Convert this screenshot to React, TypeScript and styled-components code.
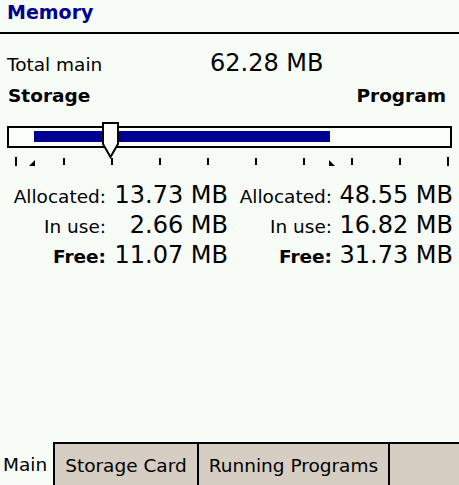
import styled, { createGlobalStyle } from "styled-components";

const GlobalStyle = createGlobalStyle`
    html, body {
        margin: 0;
        padding: 0;
        background: #f7fcf7;
    }
    body {
        font-family: "DejaVu Sans", "Liberation Sans", sans-serif;
        color: #000000;
    }
`;

const storage = { allocated: "13.73 MB", inUse: "2.66 MB", free: "11.07 MB" };
const program = { allocated: "48.55 MB", inUse: "16.82 MB", free: "31.73 MB" };
const ticks = Array.from({ length: 10 }, (_, i) => i);

const App = () => {
    return (
        <Page>
            <GlobalStyle />
            <Header>
                <Title>Memory</Title>
            </Header>
            <Content>
                <TotalRow>
                    <TotalLabel>Total main</TotalLabel>
                    <TotalValue>62.28 MB</TotalValue>
                </TotalRow>
                <SideLabels>
                    <span>Storage</span>
                    <span>Program</span>
                </SideLabels>
                <Slider>
                    <Track>
                        <Fill style={{ left: 25, width: 296 }} />
                    </Track>
                    <Thumb width="17" height="37" viewBox="0 0 17 37">
                        <path d="M1 1 H16 V22 L8.5 35 L1 22 Z" fill="#ffffff" stroke="#000000" strokeWidth="2" strokeLinejoin="miter" />
                    </Thumb>
                </Slider>
                <Ticks>
                    {ticks.map((i) => (
                        <Tick key={i} $edge={i === 0 || i === ticks.length - 1} />
                    ))}
                    <Marker $left={22} $flip={false} />
                    <Marker $left={322} $flip={true} />
                </Ticks>
                <Stats>
                    <Label>Allocated:</Label>
                    <Value>{storage.allocated}</Value>
                    <Label>Allocated:</Label>
                    <Value>{program.allocated}</Value>
                    <Label>In use:</Label>
                    <Value>{storage.inUse}</Value>
                    <Label>In use:</Label>
                    <Value>{program.inUse}</Value>
                    <Label $bold>Free:</Label>
                    <Value>{storage.free}</Value>
                    <Label $bold>Free:</Label>
                    <Value>{program.free}</Value>
                </Stats>
            </Content>
            <TabBar>
                <Tab $active>Main</Tab>
                <Tab>Storage Card</Tab>
                <Tab>Running Programs</Tab>
                <TabFiller />
            </TabBar>
        </Page>
    );
};

const Page = styled.div`
    height: 485px;
    display: flex;
    flex-direction: column;
    overflow: hidden;
`;

const Header = styled.div`
    height: 34px;
    border-bottom: 2px solid #000000;
    box-sizing: border-box;
    padding: 0 7px;
`;

const Title = styled.h1`
    margin: 0;
    font-size: 19px;
    line-height: 25px;
    font-weight: bold;
    color: #000090;
`;

const Content = styled.div`
    flex: 1;
    padding: 0 7px;
`;

const TotalRow = styled.div`
    display: flex;
    align-items: baseline;
    height: 44px;
    padding-top: 15px;
    box-sizing: border-box;
`;

const TotalLabel = styled.span`
    width: 203px;
    font-size: 18.5px;
`;

const TotalValue = styled.span`
    font-size: 24px;
`;

const SideLabels = styled.div`
    display: flex;
    justify-content: space-between;
    padding: 7px 6px 0 1px;
    font-size: 18.5px;
    font-weight: bold;
    height: 36px;
    box-sizing: border-box;
`;

const Slider = styled.div`
    position: relative;
    margin-top: 12px;
    height: 22px;
`;

const Track = styled.div`
    position: relative;
    height: 22px;
    width: 445px;
    box-sizing: border-box;
    border: 2px solid #000000;
    background: #fbfffb;
`;

const Fill = styled.div`
    position: absolute;
    top: 3px;
    height: 11px;
    background: #000090;
`;

const Thumb = styled.svg`
    position: absolute;
    left: 95px;
    top: -4px;
`;

const Ticks = styled.div`
    position: relative;
    display: flex;
    justify-content: space-between;
    align-items: flex-start;
    padding: 9px 3px 0 8px;
    height: 26px;
    box-sizing: border-box;
`;

const Tick = styled.div<{ $edge?: boolean }>`
    width: 2px;
    height: ${(p) => (p.$edge ? "9px" : "7px")};
    margin-top: ${(p) => (p.$edge ? "0" : "1px")};
    background: #000000;
`;

const Marker = styled.div<{ $left: number; $flip: boolean }>`
    position: absolute;
    top: 12px;
    left: ${(p) => p.$left}px;
    width: 0;
    height: 0;
    border-bottom: 6px solid #000000;
    ${(p) =>
        p.$flip
            ? "border-right: 6px solid transparent;"
            : "border-left: 6px solid transparent;"}
`;

const Stats = styled.div`
    display: grid;
    margin-top: 7px;
    grid-template-columns: 99px 122px 104px 121px;
    grid-auto-rows: 30px;
    align-items: baseline;
`;

const Label = styled.span<{ $bold?: boolean }>`
    text-align: right;
    font-size: 18.5px;
    font-weight: ${(p) => (p.$bold ? "bold" : "normal")};
`;

const Value = styled.span`
    text-align: right;
    font-size: 24px;
    white-space: nowrap;
`;

const TabBar = styled.div`
    display: flex;
    height: 43px;
    box-sizing: border-box;
`;

const Tab = styled.div<{ $active?: boolean }>`
    box-sizing: border-box;
    padding: 2px ${(p) => (p.$active ? "6px 0 3px" : "10px 0 10px")};
    display: flex;
    align-items: center;
    font-size: 18.5px;
    background: ${(p) => (p.$active ? "transparent" : "#d6cdc3")};
    border-top: ${(p) => (p.$active ? "none" : "2px solid #000000")};
    border-left: ${(p) => (p.$active ? "none" : "2px solid #000000")};
`;

const TabFiller = styled.div`
    flex: 1;
    background: #d6cdc3;
    border-top: 2px solid #000000;
    border-left: 2px solid #000000;
`;

export default App;
